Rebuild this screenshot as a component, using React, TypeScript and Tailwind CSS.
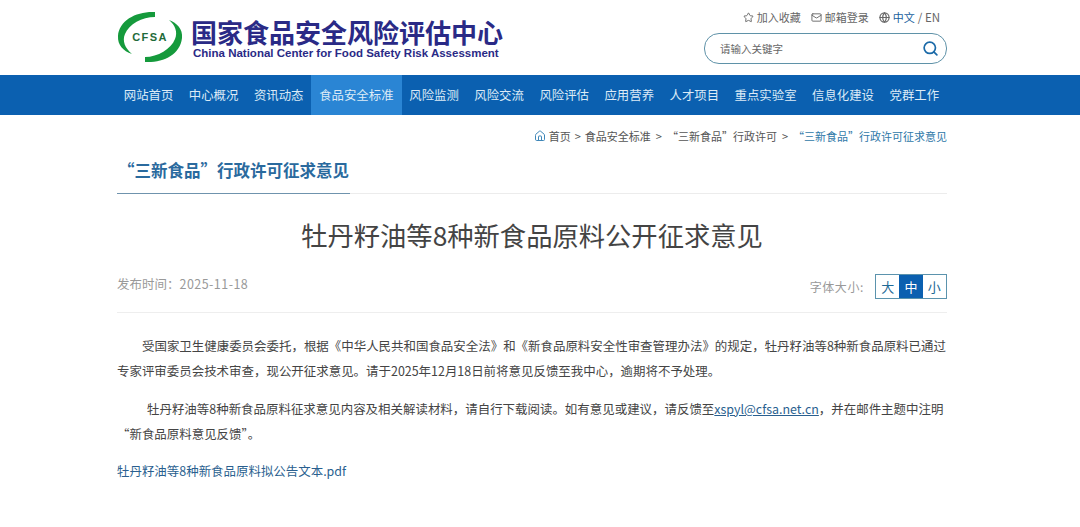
import { Globe, House, Mail, Search, Star } from 'lucide-react'

const navItems = [
  '网站首页',
  '中心概况',
  '资讯动态',
  '食品安全标准',
  '风险监测',
  '风险交流',
  '风险评估',
  '应用营养',
  '人才项目',
  '重点实验室',
  '信息化建设',
  '党群工作',
]

function Logo() {
  return (
    <div className="relative h-[52px] w-[66px] shrink-0">
      <svg viewBox="0 0 66 52" className="h-full w-full">
        <path d="M38 1C20 0 2 9 1 25c-.5 9 5 15 14 18C8 37 5 30 8 23 12 13 25 6 38 6Z" fill="#159a3c" />
        <path d="M28 51c18 1 35-7 37-24 1-9-5-15-13-18 6 5 9 12 6 19-4 10-17 18-30 18Z" fill="#159a3c" />
      </svg>
      <span className="absolute inset-0 flex items-center justify-center font-['Liberation_Sans',sans-serif] text-[11px] leading-none font-bold tracking-[1.4px] text-[#1f6b3a]">
        CFSA
      </span>
    </div>
  )
}

function Header() {
  return (
    <div className="ml-[117px] flex h-[75px] w-[830px] justify-between">
      <div className="flex pt-[11px]">
        <Logo />
        <div className="ml-2">
          <div className="pt-[7px] text-[26px] leading-[28px] font-bold whitespace-nowrap text-[#2a2a86]">
            国家食品安全风险评估中心
          </div>
          <div className="ml-[2px] font-['Liberation_Sans',sans-serif] text-[11.5px] leading-[15px] font-bold whitespace-nowrap text-[#2a2a86]">
            China National Center for Food Safety Risk Assessment
          </div>
        </div>
      </div>
      <div className="flex w-[243px] flex-col items-end pt-[10px]">
        <div className="flex h-[15px] items-center pr-[7px] text-[11px] leading-none text-[#666]">
          <Star size={11} className="mr-[3px]" />
          <span>加入收藏</span>
          <Mail size={11} className="mr-[3px] ml-[10px]" />
          <span>邮箱登录</span>
          <Globe size={11} strokeWidth={2.6} className="mr-[3px] ml-[10px]" />
          <span className="text-[#1a5f9e]">中文</span>
          <span className="ml-[3px] text-[11.5px]">/ EN</span>
        </div>
        <div className="mt-[8px] flex h-[31px] w-[243px] items-center justify-between rounded-[15px] border border-[#5f92a8] pr-[7px] pl-[15px]">
          <span className="text-[10.5px] text-[#666]">请输入关键字</span>
          <Search size={17} strokeWidth={2.4} className="text-[#1b6aa8]" />
        </div>
      </div>
    </div>
  )
}

function Nav() {
  return (
    <div className="h-10 bg-[#0b60b0]">
      <div className="ml-[116px] flex h-full w-[848px]">
        {navItems.map((item) => (
          <a
            key={item}
            className={
              'flex h-full items-center px-[7.75px] pt-[1px] text-[12.4px] whitespace-nowrap text-[#dcebf7] ' +
              (item === '食品安全标准' ? 'bg-[#2a85d4] px-[8px]' : '')
            }
          >
            {item}
          </a>
        ))}
      </div>
    </div>
  )
}

function Breadcrumb() {
  return (
    <div className="flex h-[42px] items-center justify-end text-[11px] whitespace-nowrap text-[#555]">
      <House size={12} className="mr-[3px] text-[#3f87b8]" />
      <span>首页</span>
      <span className="mx-[4px]">&gt;</span>
      <span>食品安全标准</span>
      <span className="mx-[5px]">&gt;</span>
      <span>“三新食品”行政许可</span>
      <span className="mx-[5px]">&gt;</span>
      <span className="text-[#2f78a8]">“三新食品”行政许可征求意见</span>
    </div>
  )
}

function FontSizeSwitch() {
  return (
    <div className="mt-[2px] flex items-center">
      <span className="mr-[11px] text-[12px] tracking-[0.6px] text-[#999]">字体大小:</span>
      <div className="flex h-[25px] w-[72px] border border-[#5b93ad] text-[13px] leading-none text-[#1f6a96]">
        <span className="flex flex-1 items-center justify-center">大</span>
        <span className="flex flex-1 items-center justify-center bg-[#0b60b0] text-white">中</span>
        <span className="flex flex-1 items-center justify-center">小</span>
      </div>
    </div>
  )
}

function Article() {
  return (
    <div className="text-[12.46px] leading-[25px] text-[#444]">
      <p className="pt-[21px] pl-[25px] whitespace-nowrap">
        受国家卫生健康委员会委托，根据《中华人民共和国食品安全法》和《新食品原料安全性审查管理办法》的规定，牡丹籽油等8种新食品原料已通过
      </p>
      <p className="whitespace-nowrap">
        专家评审委员会技术审查，现公开征求意见。请于2025年12月18日前将意见反馈至我中心，逾期将不予处理。
      </p>
      <p className="mt-[13px] pl-[30px] whitespace-nowrap">
        牡丹籽油等8种新食品原料征求意见内容及相关解读材料，请自行下载阅读。如有意见或建议，请反馈至
        <a className="text-[#2a5f8f] underline">xspyl@cfsa.net.cn</a>
        ，并在邮件主题中注明
      </p>
      <p className="whitespace-nowrap">“新食品原料意见反馈”。</p>
      <a className="mt-[12px] block text-[#2a5f8f]">牡丹籽油等8种新食品原料拟公告文本.pdf</a>
    </div>
  )
}

export default function App() {
  return (
    <div className="h-[527px] w-[1080px] overflow-hidden bg-white font-['Noto_Sans_CJK_SC','Liberation_Sans',sans-serif]">
      <Header />
      <Nav />
      <div className="ml-[117px] w-[830px]">
        <Breadcrumb />
        <div className="h-[37px] border-b border-[#ececec]">
          <div className="h-[37px] w-[233px] border-b border-[#6f93ad] pl-[1px] text-[16.5px] leading-[27px] font-bold whitespace-nowrap text-[#2a6a9e]">
            “三新食品”行政许可征求意见
          </div>
        </div>
        <h1 className="pt-[21px] text-center text-[26.3px] leading-[40px] text-[#444]">
          牡丹籽油等8种新食品原料公开征求意见
        </h1>
        <div className="mt-[17px] flex h-[41px] items-start justify-between border-b border-[#eeeeee]">
          <span className="pt-[2px] text-[12.5px] leading-[20px] text-[#999]">
            发布时间：<span className="tracking-[0.45px]">2025-11-18</span>
          </span>
          <FontSizeSwitch />
        </div>
        <Article />
      </div>
    </div>
  )
}
